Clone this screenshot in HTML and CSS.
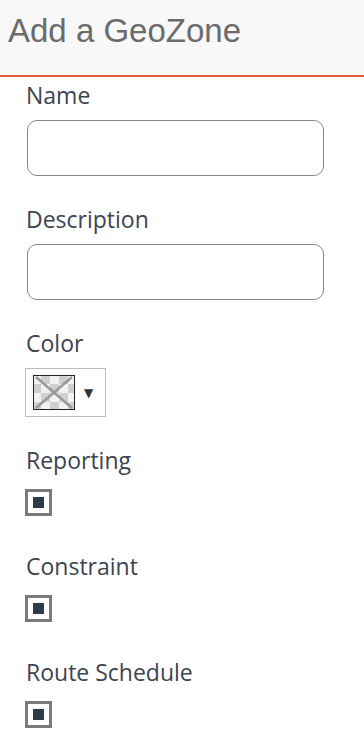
FILE: index.html
```html
<!DOCTYPE html>
<html lang="en">
<head>
    <meta charset="UTF-8">
    <meta name="viewport" content="width=device-width, initial-scale=1.0">
    <title>Add a GeoZone</title>
    <link rel="stylesheet" href="styles.css">
</head>
<body>

    <div class="header">
        <h1 class="title">Add a GeoZone</h1>
    </div>

    <form class="zone-form">
        <div class="field">
            <label for="name">Name</label>
            <input type="text" id="name" class="text-input">
        </div>

        <div class="field">
            <label for="desc">Description</label>
            <input type="text" id="desc" class="text-input">
        </div>

        <div class="field">
            <label>Color</label>
            <div class="color-pick">
                <svg class="swatch" width="42" height="35" viewBox="0 0 42 35">
                    <rect x="0" y="0" width="42" height="35" fill="#f2f2f2"/>
                    <rect x="8" y="0" width="9" height="9" fill="#cfcfcf"/>
                    <rect x="26" y="0" width="9" height="9" fill="#cfcfcf"/>
                    <rect x="0" y="9" width="8" height="9" fill="#cfcfcf"/>
                    <rect x="17" y="9" width="9" height="9" fill="#cfcfcf"/>
                    <rect x="35" y="9" width="7" height="9" fill="#cfcfcf"/>
                    <rect x="8" y="18" width="9" height="9" fill="#cfcfcf"/>
                    <rect x="26" y="18" width="9" height="9" fill="#cfcfcf"/>
                    <rect x="0" y="27" width="8" height="8" fill="#cfcfcf"/>
                    <rect x="17" y="27" width="9" height="8" fill="#cfcfcf"/>
                    <rect x="35" y="27" width="7" height="8" fill="#cfcfcf"/>
                    <path d="M3 2 L39 33 M39 2 L3 33" stroke="#9a9a9a" stroke-width="2.5"/>
                    <rect x="0.5" y="0.5" width="41" height="34" fill="none" stroke="#222" stroke-width="1"/>
                </svg>
                <span class="arrow">&#9660;</span>
            </div>
        </div>

        <div class="field">
            <label for="rep">Reporting</label>
            <input type="checkbox" id="rep" class="check" checked>
        </div>

        <div class="field">
            <label for="con">Constraint</label>
            <input type="checkbox" id="con" class="check" checked>
        </div>

        <div class="field">
            <label for="route">Route Schedule</label>
            <input type="checkbox" id="route" class="check" checked>
        </div>
    </form>

</body>
</html>
```

FILE: styles.css
```css
* {
    margin: 0;
    padding: 0;
    box-sizing: border-box;
}

body {
    background-color: #ffffff;
    font-family: 'Open Sans', 'Liberation Sans', sans-serif;
}

/* Top bar */
.header {
    height: 77px;
    background-color: #f8f8f8;
    border-bottom: 2px solid #e4573a;
    padding: 12px 8px 0;
}

.title {
    font-family: 'Liberation Sans', Arial, sans-serif;
    font-weight: normal;
    font-size: 33px;
    line-height: 38px;
    color: #6b6b6b;
}

/* Form */
.zone-form {
    padding: 3px 25px 0;
}

.field {
    display: flex;
    flex-direction: column;
    align-items: flex-start;
    margin-bottom: 28px;
}

.field label {
    display: block;
    font-size: 23px;
    line-height: 30px;
    color: #3e4350;
    margin-bottom: 10px;
    padding-left: 1px;
}

.text-input {
    display: block;
    width: 297px;
    height: 56px;
    margin-left: 2px;
    border: 1px solid #85868c;
    border-radius: 10px;
    background: #fff;
    outline: none;
}

.color-pick {
    display: flex;
    align-items: center;
    width: 81px;
    height: 49px;
    border: 1px solid #bdbdbd;
    padding-left: 7px;
}

.swatch {
    display: block;
}

.arrow {
    font-family: 'DejaVu Sans', sans-serif;
    font-size: 12px;
    color: #333;
    margin-left: 9px;
}

.check {
    -webkit-appearance: none;
    appearance: none;
    display: block;
    width: 27px;
    height: 27px;
    border: 3px solid #7a7a7a;
    background-color: #2d3a4b;
    box-shadow: inset 0 0 0 5px #fff;
    margin: 4px 0 7px;
}
```
